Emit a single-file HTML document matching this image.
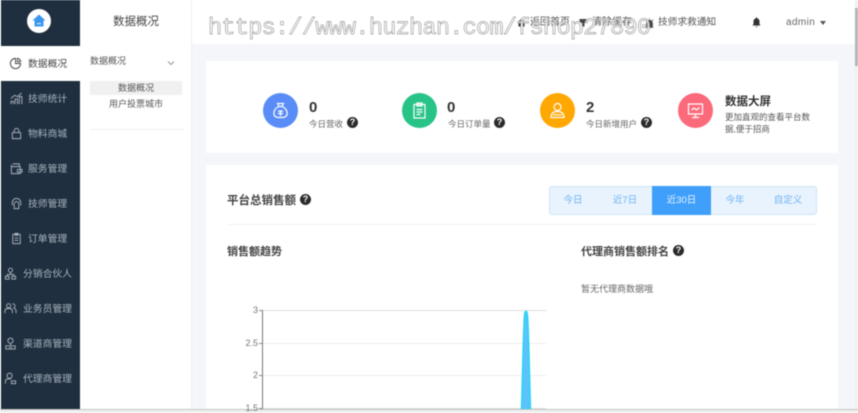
<!DOCTYPE html>
<html lang="zh">
<head>
<meta charset="utf-8">
<title>数据概况</title>
<style>
html,body{margin:0;padding:0;width:858px;height:413px;overflow:hidden;background:#fff}
body{position:relative;font-family:"Liberation Sans","Noto Sans CJK SC",sans-serif;color:#333}
#root{position:absolute;left:0;top:0;width:858px;height:413px;overflow:hidden;filter:blur(.5px)}
.a{position:absolute;white-space:nowrap}
.m{position:absolute;left:0;width:80px;height:35px;color:#a9b4bf;font-size:9.800px;line-height:37px;white-space:nowrap}
.m svg{position:absolute;top:11px;width:13px;height:13px;fill:none;stroke:#aab4be;stroke-width:1}
.m span{position:absolute}
.q{position:absolute;width:11px;height:11px;border-radius:50%;background:#2b2b2b;color:#fff;font-size:9px;font-weight:bold;line-height:11px;text-align:center}
.c{position:absolute;width:35px;height:35px;border-radius:50%;top:93px}
.c svg{position:absolute;left:8px;top:8px;width:19px;height:19px;fill:none;stroke:#fff;stroke-width:1.200}
.n{position:absolute;top:99px;font-size:15px;font-weight:bold;line-height:18px;color:#333}
.l{position:absolute;top:118px;font-size:8.500px;line-height:12px;color:#666;white-space:nowrap}
.seg{position:absolute;top:187px;height:28px;line-height:28px;text-align:center;font-size:9.500px;color:#6cb2f3}
.y{position:absolute;width:20px;text-align:right;left:238px;font-size:9px;line-height:10px;color:#777}
.g{position:absolute;left:263px;width:283px;height:1px;background:#e8e8e8}
.t{position:absolute;left:259px;width:4px;height:1px;background:#888}
</style>
</head>
<body>
<div id="root">
  <!-- backgrounds -->
  <div class="a" style="left:192px;top:0;width:663px;height:409px;background:#f5f6fa"></div>
  <div class="a" style="left:192px;top:0;width:663px;height:44px;background:#fff"></div>
  <div class="a" style="left:1px;top:0;width:79px;height:409px;background:#1f2f3f"></div>
  <div class="a" style="left:81px;top:0;width:110px;height:409px;background:#fff"></div>
  <div class="a" style="left:191px;top:0;width:1px;height:409px;background:#eef0f4"></div>
  <div class="a" style="left:855px;top:0;width:3px;height:409px;background:#f1f1f1"></div>
  <div class="a" style="left:855px;top:8px;width:3px;height:58px;background:#b5b5b5"></div>
  <div class="a" style="left:0;top:409px;width:858px;height:1px;background:#c4c4c4"></div>
  <div class="a" style="left:0;top:410px;width:858px;height:3px;background:#f0f0f0"></div>

  <!-- logo -->
  <div class="a" style="left:27px;top:9px;width:24px;height:24px;border-radius:50%;background:#fff"></div>
  <svg class="a" style="left:32px;top:14px;width:14px;height:13px" viewBox="0 0 14 13"><path d="M7 0.500L0.500 6.500H2.500V12.500H11.500V6.500H13.500Z" fill="#3a97f0"/><rect x="5" y="9" width="4" height="1.200" fill="#cfe6fb"/></svg>

  <!-- primary menu -->
  <div class="a" style="left:0;top:46px;width:81px;height:35px;background:#fff"></div>
  <div class="m" style="top:46px;color:#444"><svg style="left:9px;stroke:#444" viewBox="0 0 14 14"><path d="M7 1.500A5.500 5.500 0 1 0 12.500 7H7Z"/><path d="M9 1.500A4 4 0 0 1 12.500 5H9Z"/></svg><span style="left:28px">数据概况</span></div>
  <div class="m" style="top:81px"><svg style="left:10px" viewBox="0 0 14 14"><path d="M1 13V10H3.500V13M5.500 13V7.500H8V13M10 13V5H12.800V13M1 7L5 3.500L8 5L12.500 1"/></svg><span style="left:28px">技师统计</span></div>
  <div class="m" style="top:116px"><svg style="left:10px" viewBox="0 0 14 14"><path d="M2.500 6H11.500V12.500H2.500ZM4.500 6V4A2.500 2.500 0 0 1 9.500 4V6"/></svg><span style="left:28px">物料商城</span></div>
  <div class="m" style="top:151px"><svg style="left:10px" viewBox="0 0 14 14"><path d="M3 2H10V5M1.500 5H11V12.500H1.500ZM1.500 5V3M8 8H13V11H8Z"/></svg><span style="left:28px">服务管理</span></div>
  <div class="m" style="top:186px"><svg style="left:10px" viewBox="0 0 14 14"><path d="M2.500 9V6A4.500 4.500 0 0 1 11.500 6V9M4.500 12.500V7.500A2.500 2.500 0 0 1 9.500 7.500V12.500H4.500Z"/></svg><span style="left:28px">技师管理</span></div>
  <div class="m" style="top:221px"><svg style="left:10px" viewBox="0 0 14 14"><path d="M3 2.500H11V12.500H3ZM5.500 1.500H8.500V3.500H5.500ZM5 6.500H9M5 9H9"/></svg><span style="left:28px">订单管理</span></div>
  <div class="m" style="top:256px"><svg style="left:4px" viewBox="0 0 14 14"><circle cx="7" cy="3.500" r="2.200"/><path d="M7 5.700V8M3.500 10V8H10.500V10"/><rect x="1.500" y="10" width="4" height="3"/><rect x="8.500" y="10" width="4" height="3"/></svg><span style="left:23px">分销合伙人</span></div>
  <div class="m" style="top:291px"><svg style="left:4px" viewBox="0 0 14 14"><circle cx="5" cy="4" r="2.200"/><path d="M1 12V9.500A3 3 0 0 1 4 7H6A3 3 0 0 1 9 9.500V12M9 2A2.200 2.200 0 0 1 10 6.500A3 3 0 0 1 13 9.500V12"/></svg><span style="left:23px">业务员管理</span></div>
  <div class="m" style="top:326px"><svg style="left:4px" viewBox="0 0 14 14"><circle cx="7" cy="4" r="2.800"/><path d="M7 7V9M2 13V9.500H12V13ZM5 11.500H9"/></svg><span style="left:23px">渠道商管理</span></div>
  <div class="m" style="top:361px"><svg style="left:4px" viewBox="0 0 14 14"><circle cx="6" cy="4" r="2.800"/><path d="M1.500 12.500V10A3 3 0 0 1 4.500 7.500H7.500M8 9.500H12.500V12.500H8Z"/></svg><span style="left:23px">代理商管理</span></div>

  <!-- secondary menu -->
  <div class="a" style="left:81px;top:0;width:110px;height:45px;line-height:45px;text-align:center;font-size:11.500px;color:#444">数据概况</div>
  <div class="a" style="left:90px;top:55px;font-size:9px;line-height:13px;color:#555">数据概况</div>
  <svg class="a" style="left:167px;top:60px;width:8px;height:6px" viewBox="0 0 8 6"><path d="M1 1.500L4 4.500L7 1.500" fill="none" stroke="#999"/></svg>
  <div class="a" style="left:90px;top:81px;width:92px;height:14px;background:#f0f0f0;text-align:center;font-size:9px;line-height:15px;color:#555">数据概况</div>
  <div class="a" style="left:90px;top:98px;width:92px;text-align:center;font-size:9px;line-height:13px;color:#555">用户投票城市</div>
  <div class="a" style="left:91px;top:129px;width:92px;height:1px;background:#eeeeee"></div>

  <!-- header right -->
  <svg class="a" style="left:517px;top:18px;width:9px;height:9px" viewBox="0 0 9 9"><path d="M4.500 0.500L0.500 4.500H1.500V8.500H3.500V6H5.500V8.500H7.500V4.500H8.500Z" fill="#333"/></svg>
  <div class="a" style="left:530px;top:16px;font-size:10px;line-height:13px;color:#555">返回首页</div>
  <svg class="a" style="left:579px;top:18px;width:9px;height:9px" viewBox="0 0 9 9"><path d="M0.500 1H8.500V5H5.500V8.500H3.500V5H0.500Z" fill="#444"/></svg>
  <div class="a" style="left:592px;top:16px;font-size:10px;line-height:13px;color:#555">清除缓存</div>
  <svg class="a" style="left:645px;top:18px;width:9px;height:10px" viewBox="0 0 9 10"><path d="M1.500 9V5A3 3 0 0 1 7.500 5V9ZM0.500 9.500H8.500M4.500 0V1M0.500 1.500L1.500 2.500M8.500 1.500L7.500 2.500" fill="#444" stroke="#444" stroke-width=".6"/></svg>
  <div class="a" style="left:658px;top:16px;font-size:9.700px;line-height:13px;color:#555">技师求救通知</div>
  <svg class="a" style="left:752px;top:17px;width:9px;height:11px" viewBox="0 0 9 11"><path d="M4.500 0.500A1 1 0 0 1 5.500 1.500A3 3 0 0 1 7.500 4.500V7L8.500 8.500H0.500L1.500 7V4.500A3 3 0 0 1 3.500 1.500A1 1 0 0 1 4.500 0.500ZM3.500 9.300H5.500L4.500 10.500Z" fill="#333"/></svg>
  <div class="a" style="left:786px;top:16px;font-size:10px;line-height:14px;letter-spacing:.4px;color:#666">admin</div>
  <div class="a" style="left:820px;top:21px;width:0;height:0;border-left:3px solid transparent;border-right:3px solid transparent;border-top:4px solid #555"></div>

  <!-- watermark -->
  <div class="a" style="left:208px;top:14px;font-family:'Liberation Mono',monospace;font-size:23.500px;letter-spacing:-.7px;line-height:30px;color:rgba(255,255,255,.8);-webkit-text-stroke:.7px #a0a0a0">https://www.huzhan.com/fshop27890</div>

  <!-- stats card -->
  <div class="a" style="left:206px;top:61px;width:632px;height:92px;background:#fff"></div>
  <div class="c" style="left:263px;background:#5a8cf7"><svg viewBox="0 0 19 19"><path d="M6.500 2.500H12.500L11 5.500H8ZM8 5.500C4 7 2.500 10.500 3 13.500C3.500 16 5.500 16.500 9.500 16.500C13.500 16.500 15.500 16 16 13.500C16.500 10.500 15 7 11 5.500M7 10H12M7 12.500H12M9.500 10V15"/></svg></div>
  <div class="n" style="left:309px">0</div>
  <div class="l" style="left:309px">今日营收</div>
  <div class="q" style="left:347px;top:117px">?</div>

  <div class="c" style="left:402px;background:#28c387"><svg viewBox="0 0 19 19"><path d="M4 3.500H15V17H4ZM7 2H12V5H7ZM6.500 8.500H12.500M6.500 11H12.500M6.500 13.500H10.500"/></svg></div>
  <div class="n" style="left:447px">0</div>
  <div class="l" style="left:448px">今日订单量</div>
  <div class="q" style="left:494px;top:117px">?</div>

  <div class="c" style="left:540px;background:#ffa702"><svg viewBox="0 0 19 19"><circle cx="9.500" cy="6" r="3.500"/><path d="M3 16.500C3 12.500 5.500 10.500 9.500 10.500C13.500 10.500 16 12.500 16 16.500ZM5 13.800H14"/></svg></div>
  <div class="n" style="left:586px">2</div>
  <div class="l" style="left:586px">今日新增用户</div>
  <div class="q" style="left:641px;top:117px">?</div>

  <div class="c" style="left:678px;background:#fb6a7b"><svg viewBox="0 0 19 19"><path d="M2.500 3H16.500V13H2.500ZM9.500 13V16M6 16.500H13M5.500 9L8 7L10.500 9L13.500 6.500"/></svg></div>
  <div class="a" style="left:725px;top:95px;font-size:11.500px;font-weight:bold;line-height:15px;color:#333">数据大屏</div>
  <div class="a" style="left:725px;top:111px;font-size:8.500px;line-height:12px;color:#555;white-space:normal;width:88px">更加直观的查看平台数据,便于招商</div>

  <!-- main card -->
  <div class="a" style="left:206px;top:165px;width:632px;height:244px;background:#fff"></div>
  <div class="a" style="left:227px;top:193px;font-size:11.500px;font-weight:bold;line-height:16px;color:#444">平台总销售额</div>
  <div class="q" style="left:300px;top:194px">?</div>

  <div class="a" style="left:549px;top:186px;width:266px;height:27px;background:#e8f3fd;border:1px solid #cfe3f7;border-radius:3px"></div>
  <div class="seg" style="left:549px;width:48px">今日</div>
  <div class="seg" style="left:600px;width:50px">近7日</div>
  <div class="a" style="left:652px;top:186px;width:59px;height:29px;background:#3f9ffa"></div>
  <div class="seg" style="left:652px;width:59px;color:#e9f4ff">近30日</div>
  <div class="seg" style="left:711px;width:48px">今年</div>
  <div class="seg" style="left:763px;width:50px">自定义</div>

  <div class="a" style="left:228px;top:224px;width:589px;height:1px;background:#f0f1f3"></div>

  <div class="a" style="left:227px;top:244px;font-size:11px;font-weight:bold;line-height:16px;color:#444">销售额趋势</div>
  <div class="a" style="left:581px;top:244px;font-size:11px;font-weight:bold;line-height:16px;color:#444">代理商销售额排名</div>
  <div class="q" style="left:673px;top:245px">?</div>
  <div class="a" style="left:581px;top:283px;font-size:9px;line-height:13px;color:#666">暂无代理商数据哦</div>

  <!-- chart -->
  <div class="g" style="top:310px;background:#dcdcdc"></div>
  <div class="g" style="top:343px;background:#eeeeee"></div>
  <div class="g" style="top:375px;background:#eeeeee"></div>
  <div class="g" style="top:408px;background:#dcdcdc"></div>
  <div class="a" style="left:262px;top:310px;width:1px;height:99px;background:#777"></div>
  <div class="t" style="top:310px"></div><div class="t" style="top:343px"></div><div class="t" style="top:375px"></div><div class="t" style="top:408px"></div>
  <div class="y" style="top:305px">3</div>
  <div class="y" style="top:338px">2.5</div>
  <div class="y" style="top:370px">2</div>
  <div class="y" style="top:403px">1.5</div>
  <svg class="a" style="left:516px;top:305px;width:20px;height:104px" viewBox="0 0 20 104">
    <path d="M5.500 104C6.500 70 7.500 20 8.500 10C9.200 5 10.800 5 11.500 10C12.500 20 13.500 70 14.500 104Z" fill="#5cc4fb" stroke="#22d6f7" stroke-width="1.400"/>
  </svg>
</div>
</body>
</html>
